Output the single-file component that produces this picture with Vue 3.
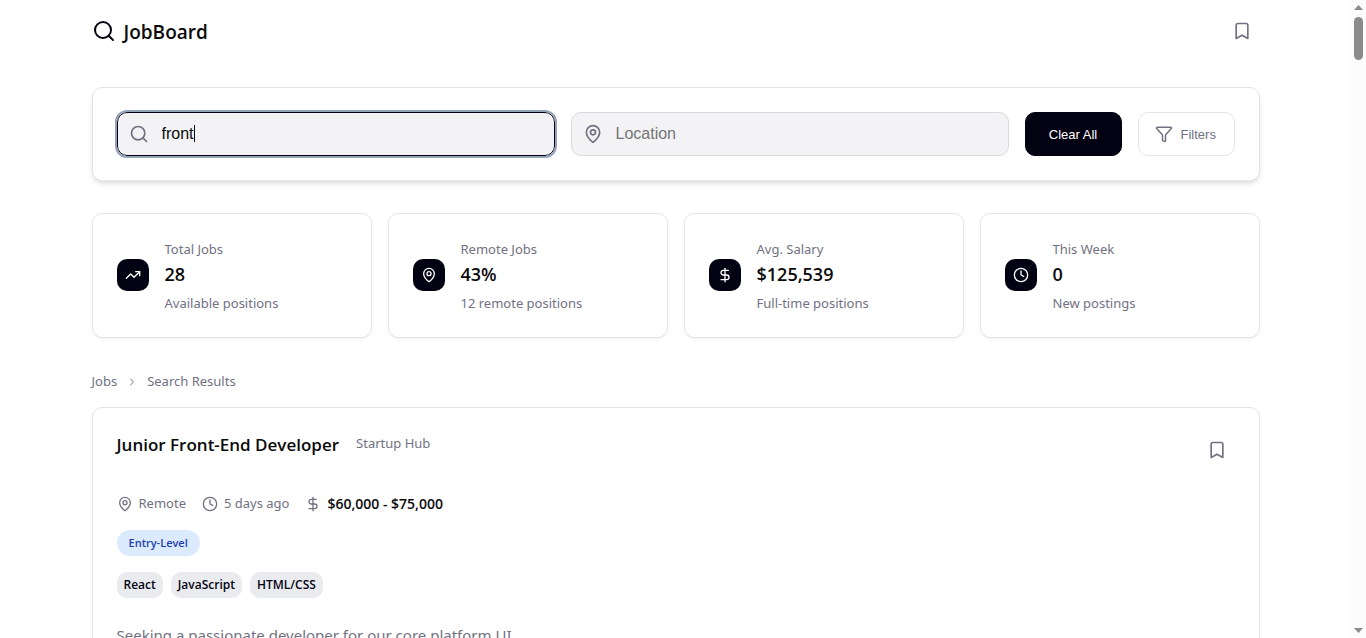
<script setup>
import { ref } from 'vue'

const query = ref('front')
const location = ref('')

const icons = {
  search: ['M19 11a8 8 0 1 1-16 0a8 8 0 0 1 16 0z', 'm21 21-4.3-4.3'],
  bookmark: ['m19 21-7-4-7 4V5a2 2 0 0 1 2-2h10a2 2 0 0 1 2 2v16z'],
  pin: [
    'M20 10c0 4.993-5.539 10.193-7.399 11.799a1 1 0 0 1-1.202 0C9.539 20.193 4 14.993 4 10a8 8 0 0 1 16 0',
    'M15 10a3 3 0 1 1-6 0a3 3 0 0 1 6 0z'
  ],
  funnel: [
    'M10 20a1 1 0 0 0 .553.895l2 1A1 1 0 0 0 14 21v-7a2 2 0 0 1 .517-1.341L21.74 4.67A1 1 0 0 0 21 3H3a1 1 0 0 0-.742 1.67l7.225 7.989A2 2 0 0 1 10 14z'
  ],
  trend: ['M16 7h6v6', 'm22 7-8.5 8.5-5-5L2 17'],
  dollar: ['M12 2v20', 'M17 5H9.500a3.500 3.500 0 0 0 0 7h5a3.500 3.500 0 0 1 0 7H6'],
  clock: ['M22 12a10 10 0 1 1-20 0a10 10 0 0 1 20 0z', 'M12 6v6l4 2'],
  chevron: ['m9 18 6-6-6-6']
}

const stats = [
  { icon: 'trend', label: 'Total Jobs', value: '28', note: 'Available positions' },
  { icon: 'pin', label: 'Remote Jobs', value: '43%', note: '12 remote positions' },
  { icon: 'dollar', label: 'Avg. Salary', value: '$125,539', note: 'Full-time positions' },
  { icon: 'clock', label: 'This Week', value: '0', note: 'New postings' }
]

const skills = ['React', 'JavaScript', 'HTML/CSS']
</script>

<template>
  <div class="shell">
    <div class="page">
      <header class="container header">
        <a class="brand" href="#">
          <svg class="icon i24" viewBox="0 0 24 24" aria-hidden="true"><path v-for="d in icons.search" :key="d" :d="d" /></svg>
          <span>JobBoard</span>
        </a>
        <button class="icon-button" type="button" aria-label="Saved jobs">
          <svg class="icon i20" viewBox="0 0 24 24" aria-hidden="true"><path v-for="d in icons.bookmark" :key="d" :d="d" /></svg>
        </button>
      </header>

      <main class="container">
        <form class="card search" @submit.prevent>
          <div class="field">
            <svg class="icon i20" viewBox="0 0 24 24" aria-hidden="true"><path v-for="d in icons.search" :key="d" :d="d" /></svg>
            <input v-model="query" class="active" type="text" aria-label="Search jobs" />
            <span class="caret" aria-hidden="true"></span>
          </div>
          <div class="field">
            <svg class="icon i20" viewBox="0 0 24 24" aria-hidden="true"><path v-for="d in icons.pin" :key="d" :d="d" /></svg>
            <input v-model="location" type="text" placeholder="Location" aria-label="Location" />
          </div>
          <button class="clear" type="button">Clear All</button>
          <button class="filters" type="button">
            <svg class="icon i18" viewBox="0 0 24 24" aria-hidden="true"><path v-for="d in icons.funnel" :key="d" :d="d" /></svg>
            <span>Filters</span>
          </button>
        </form>

        <section class="stats">
          <article v-for="s in stats" :key="s.label" class="card stat">
            <div class="badge">
              <svg class="icon i16" viewBox="0 0 24 24" aria-hidden="true"><path v-for="d in icons[s.icon]" :key="d" :d="d" /></svg>
            </div>
            <div class="figures">
              <p class="label">{{ s.label }}</p>
              <p class="value">{{ s.value }}</p>
              <p class="label">{{ s.note }}</p>
            </div>
          </article>
        </section>

        <nav class="crumbs" aria-label="Breadcrumb">
          <a href="#">Jobs</a>
          <svg class="icon i12" viewBox="0 0 24 24" aria-hidden="true"><path v-for="d in icons.chevron" :key="d" :d="d" /></svg>
          <span>Search Results</span>
        </nav>

        <article class="card job">
          <div class="job-head">
            <div class="job-title">
              <h2>Junior Front-End Developer</h2>
              <span class="company">Startup Hub</span>
            </div>
            <button class="icon-button" type="button" aria-label="Save job">
              <svg class="icon i20" viewBox="0 0 24 24" aria-hidden="true"><path v-for="d in icons.bookmark" :key="d" :d="d" /></svg>
            </button>
          </div>
          <div class="meta">
            <span class="meta-item">
              <svg class="icon i16" viewBox="0 0 24 24" aria-hidden="true"><path v-for="d in icons.pin" :key="d" :d="d" /></svg>
              <span>Remote</span>
            </span>
            <span class="meta-item">
              <svg class="icon i16" viewBox="0 0 24 24" aria-hidden="true"><path v-for="d in icons.clock" :key="d" :d="d" /></svg>
              <span>5 days ago</span>
            </span>
            <span class="meta-item">
              <svg class="icon i16" viewBox="0 0 24 24" aria-hidden="true"><path v-for="d in icons.dollar" :key="d" :d="d" /></svg>
              <span class="salary">$60,000 - $75,000</span>
            </span>
          </div>
          <span class="level">Entry-Level</span>
          <ul class="skills">
            <li v-for="k in skills" :key="k">{{ k }}</li>
          </ul>
          <p class="description">Seeking a passionate developer for our core platform UI.</p>
        </article>
      </main>
    </div>

    <div class="scrollbar" aria-hidden="true">
      <svg class="arrow" viewBox="0 0 9 5"><path d="M0 5 4.500 0 9 5z" /></svg>
      <div class="thumb"></div>
      <svg class="arrow" viewBox="0 0 9 5"><path d="M0 0 4.500 5 9 0z" /></svg>
    </div>
  </div>
</template>

<style>
html,
body {
  background: #fff;
  overflow: hidden;
}
</style>

<style scoped>
* {
  box-sizing: border-box;
}

.shell {
  display: flex;
  height: 100vh;
  overflow: hidden;
  color: #0a0a0a;
  font-family: "Segoe UI", "Noto Sans", sans-serif;
  font-size: 13px;
}

.page {
  flex: 1;
  min-width: 0;
  overflow: hidden;
}

.container {
  max-width: 1200px;
  margin: 0 auto;
  padding: 0 16px;
}

p,
h2,
ul {
  margin: 0;
  padding: 0;
}

a {
  color: inherit;
  text-decoration: none;
}

.icon {
  display: block;
  flex: none;
  fill: none;
  stroke: currentColor;
  stroke-width: 2;
  stroke-linecap: round;
  stroke-linejoin: round;
}

.i12 { width: 12px; height: 12px; }
.i16 { width: 16px; height: 16px; }
.i18 { width: 18px; height: 18px; }
.i20 { width: 20px; height: 20px; }
.i24 { width: 24px; height: 24px; }

.brand,
.value,
.job-title h2,
.salary,
.level,
.skills {
  font-family: "Segoe UI", "Open Sans", sans-serif;
}

.header {
  display: flex;
  align-items: center;
  justify-content: space-between;
  height: 62px;
}

.brand {
  display: flex;
  align-items: center;
  gap: 8px;
  font-size: 19px;
  font-weight: 600;
}

.brand .icon {
  color: #030213;
}

.brand span {
  padding-top: 2px;
}

.icon-button {
  padding: 8px;
  border: 0;
  background: transparent;
  color: #717182;
}

.card {
  border: 1px solid #e5e5e5;
  border-radius: 10px;
  background: #fff;
  padding: 24px;
}

.search {
  display: grid;
  grid-template-columns: 1fr 1fr auto auto;
  gap: 16px;
  margin-top: 25px;
  box-shadow: 0 4px 6px -1px rgba(0, 0, 0, 0.1), 0 2px 4px -2px rgba(0, 0, 0, 0.1);
}

.field {
  position: relative;
}

.field .icon {
  position: absolute;
  left: 12px;
  top: 12px;
  color: #717182;
}

input {
  display: block;
  width: 100%;
  height: 44px;
  padding: 0 16px 0 44px;
  border: 1px solid #d9d9dc;
  border-radius: 10px;
  background: #f3f3f5;
  color: #0a0a0a;
  font-family: "Liberation Sans", Arial, sans-serif;
  font-size: 16px;
}

input::placeholder {
  color: #757575;
  opacity: 1;
}

input.active {
  border-color: #030213;
  outline: 2px solid #94a3b8;
  caret-color: transparent;
}

.caret {
  position: absolute;
  left: 77px;
  top: 13px;
  width: 1px;
  height: 17px;
  background: #0a0a0a;
}

.search button {
  min-width: 97px;
  height: 44px;
  border-radius: 10px;
  font-family: "Liberation Sans", Arial, sans-serif;
  font-size: 13px;
}

.clear {
  padding: 0 20px;
  border: 1px solid #030213;
  background: #030213;
  color: #fff;
}

.filters {
  display: flex;
  align-items: center;
  gap: 8px;
  padding: 0 16px;
  border: 1px solid #e5e5e5;
  background: #fff;
  color: #717182;
}

.stats {
  display: grid;
  grid-template-columns: repeat(4, 1fr);
  gap: 16px;
  margin-top: 32px;
}

.stat {
  display: flex;
  align-items: center;
  gap: 16px;
  padding-bottom: 23px;
  box-shadow: 0 1px 2px rgba(0, 0, 0, 0.05);
}

.badge {
  display: grid;
  place-items: center;
  flex: none;
  width: 32px;
  height: 32px;
  margin-bottom: 2px;
  border-radius: 10px;
  background: #030213;
  color: #fff;
}

.figures {
  padding-top: 1px;
}

.label {
  color: #717182;
  line-height: 21px;
}

.value {
  padding-bottom: 4px;
  font-size: 18px;
  font-weight: 600;
  line-height: 29px;
}

.crumbs {
  display: flex;
  align-items: center;
  gap: 9px;
  margin-top: 32px;
  color: #717182;
  line-height: 23px;
}

.job {
  margin-top: 14px;
  box-shadow: 0 1px 2px rgba(0, 0, 0, 0.05);
}

.job-head {
  display: flex;
  align-items: flex-start;
  justify-content: space-between;
}

.job-title {
  display: flex;
  align-items: flex-start;
  gap: 17px;
}

.job-title h2 {
  font-size: 17px;
  font-weight: 600;
  line-height: 26px;
}

.company {
  color: #717182;
  line-height: 22px;
}

.meta {
  display: flex;
  gap: 16px;
  margin-top: 24px;
  color: #717182;
  line-height: 23px;
}

.meta-item {
  display: flex;
  align-items: center;
  gap: 6px;
}

.salary {
  color: #0a0a0a;
  font-size: 14px;
  font-weight: 600;
}

.level {
  display: inline-block;
  margin-top: 15px;
  padding: 0 12px;
  border-radius: 13px;
  background: #dbeafe;
  color: #1e40af;
  font-size: 11px;
  font-weight: 600;
  line-height: 26px;
}

.skills {
  display: flex;
  gap: 8px;
  margin-top: 16px;
  list-style: none;
}

.skills li {
  padding: 0 7px;
  border-radius: 10px;
  background: #e9ebef;
  color: #030213;
  font-size: 12px;
  font-weight: 600;
  line-height: 26px;
}

.description {
  margin-top: 24px;
  color: #717182;
  font-size: 15px;
  line-height: 26px;
}

.scrollbar {
  display: flex;
  flex-direction: column;
  align-items: center;
  width: 15px;
  padding: 5px 0;
  background: #fcfcfc;
}

.arrow {
  width: 9px;
  height: 5px;
  fill: #8b8b8b;
}

.thumb {
  width: 9px;
  height: 43px;
  margin: 7px 0 auto;
  border-radius: 5px;
  background: #8b8b8b;
}
</style>
